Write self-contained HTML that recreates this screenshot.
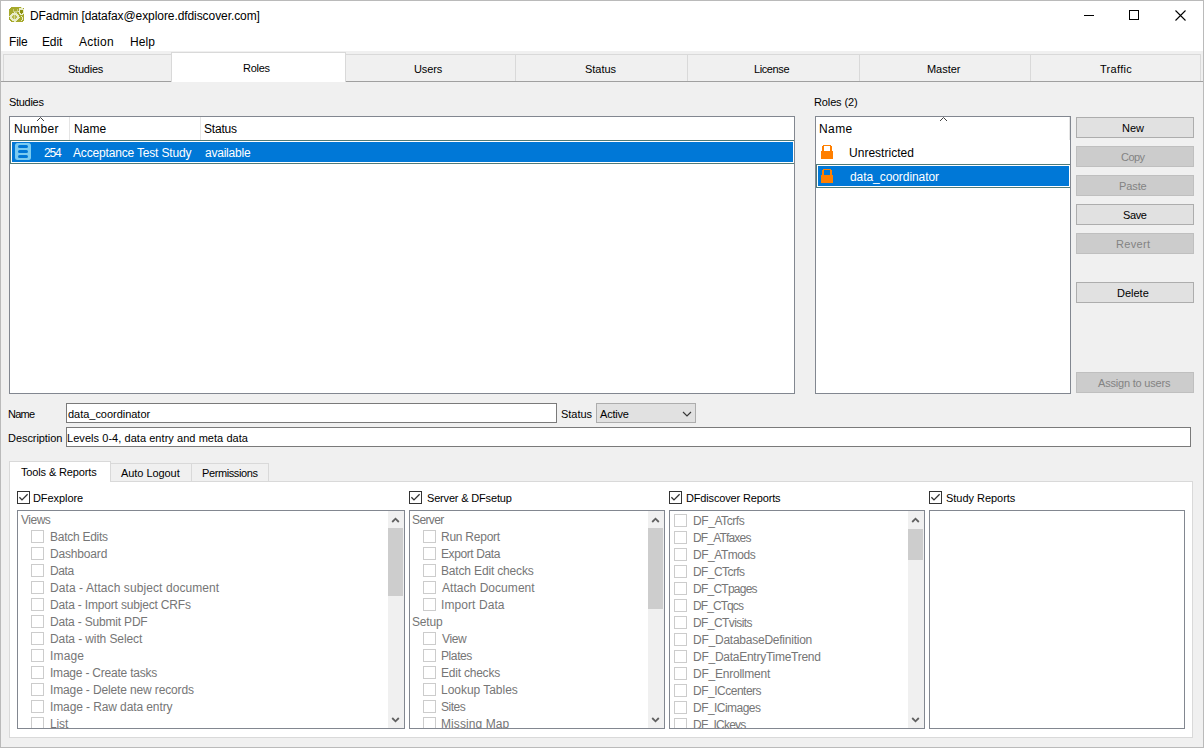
<!DOCTYPE html>
<html><head><meta charset="utf-8"><style>
html,body{margin:0;padding:0;width:1204px;height:748px;overflow:hidden;background:#f0f0f0}
.b{position:absolute;box-sizing:border-box}
.t{position:absolute;font-family:"Liberation Sans", sans-serif;font-size:12px;line-height:16px;white-space:nowrap;color:#000}
</style></head><body>
<div class="b" style="left:0px;top:0px;width:1204px;height:748px;border:1px solid #bababa;background:#f0f0f0;"></div>
<div class="b" style="left:1px;top:1px;width:1202px;height:50px;background:#ffffff;"></div>
<svg class="b" style="left:9px;top:7px" width="16" height="16" viewBox="0 0 16 16" shape-rendering="crispEdges">
<path d="M2 0H13V1H15V14H14V15H2V14H1V13H0V2H1V1H2Z" fill="#a6a92b"/>
<path d="M4 2H5V4H8V2H9V5H8V6H5V5H4Z" fill="#c7cb7e"/>
<g fill="#e9ecc9">
<path d="M3 6H8V7H9V8H10V12H9V13H8V14H3V13H2V12H1V8H2V7H3Z"/>
<path d="M5 5H6V6H5Z"/><path d="M0 9H1V10H0Z"/><path d="M5 14H7V15H5Z"/>
<path d="M11 1H14V2H15V7H14V8H11V7H10V2H11Z"/>
<path d="M10 1H11V2H10Z"/><path d="M12 0H13V1H12Z"/><path d="M9 4H10V5H9Z"/>
<path d="M12 9H13V10H14V13H13V14H12V13H13V10H12Z"/>
<path d="M10 10H11V11H10Z"/>
</g>
<path d="M4 8H7V9H8V11H7V12H4V11H3V9H4Z" fill="#b5b94b"/>
<path d="M5 8H6V12H5Z" fill="#d0d38f"/>
<path d="M11 3H14V6H13V7H12V6H11Z" fill="#8a900f"/>
</svg>
<div class="t" style="left:30px;top:8px;color:#000;font-size:12px;letter-spacing:-0.077px">DFadmin [datafax@explore.dfdiscover.com]</div>
<div class="b" style="left:1084px;top:15px;width:10px;height:1px;background:#000;"></div>
<div class="b" style="left:1129px;top:10px;width:10px;height:10px;border:1px solid #000;"></div>
<svg class="b" style="left:1175px;top:10px" width="11" height="11" viewBox="0 0 11 11"><path d="M0.5 0.5L10.5 10.5M10.5 0.5L0.5 10.5" stroke="#000" stroke-width="1.1"/></svg>
<div class="t" style="left:9px;top:34px;color:#000;font-size:12px;letter-spacing:-0.2px">File</div>
<div class="t" style="left:42px;top:34px;color:#000;font-size:12px;letter-spacing:-0.134px">Edit</div>
<div class="t" style="left:79px;top:34px;color:#000;font-size:12px;letter-spacing:0.24px">Action</div>
<div class="t" style="left:130px;top:34px;color:#000;font-size:12px;letter-spacing:0.066px">Help</div>
<div class="b" style="left:1px;top:81px;width:1202px;height:1px;background:#a0a0a0;"></div>
<div class="b" style="left:3px;top:54px;width:169px;height:27px;border:1px solid #d9d9d9;background:#f0f0f0;border-bottom:none;"></div>
<div class="t" style="left:68px;top:61px;color:#000;font-size:11px;letter-spacing:-0.233px">Studies</div>
<div class="b" style="left:345px;top:54px;width:171px;height:27px;border:1px solid #d9d9d9;background:#f0f0f0;border-bottom:none;"></div>
<div class="t" style="left:414px;top:61px;color:#000;font-size:11px;letter-spacing:-0.1px">Users</div>
<div class="b" style="left:515px;top:54px;width:173px;height:27px;border:1px solid #d9d9d9;background:#f0f0f0;border-bottom:none;"></div>
<div class="t" style="left:585px;top:61px;color:#000;font-size:11px;letter-spacing:-0.04px">Status</div>
<div class="b" style="left:687px;top:54px;width:173px;height:27px;border:1px solid #d9d9d9;background:#f0f0f0;border-bottom:none;"></div>
<div class="t" style="left:754px;top:61px;color:#000;font-size:11px;letter-spacing:-0.4px">License</div>
<div class="b" style="left:859px;top:54px;width:172px;height:27px;border:1px solid #d9d9d9;background:#f0f0f0;border-bottom:none;"></div>
<div class="t" style="left:927px;top:61px;color:#000;font-size:11px;letter-spacing:-0.04px">Master</div>
<div class="b" style="left:1030px;top:54px;width:171px;height:27px;border:1px solid #d9d9d9;background:#f0f0f0;border-bottom:none;"></div>
<div class="t" style="left:1100px;top:61px;color:#000;font-size:11px;letter-spacing:0.3px">Traffic</div>
<div class="b" style="left:171px;top:52px;width:175px;height:30px;border:1px solid #d9d9d9;background:#ffffff;border-bottom:none;"></div>
<div class="t" style="left:243px;top:60px;color:#000;font-size:11px;letter-spacing:-0.25px">Roles</div>
<div class="t" style="left:9px;top:94px;color:#000;font-size:11px;letter-spacing:-0.3px">Studies</div>
<div class="t" style="left:814px;top:94px;color:#000;font-size:11px;letter-spacing:-0.125px">Roles (2)</div>
<div class="b" style="left:9px;top:116px;width:786px;height:278px;border:1px solid #828790;background:#ffffff;"></div>
<div class="b" style="left:69px;top:117px;width:1px;height:23px;background:#e5e5e5;"></div>
<div class="b" style="left:200px;top:117px;width:1px;height:23px;background:#e5e5e5;"></div>
<svg class="b" style="left:36px;top:116px" width="10" height="7" viewBox="0 0 10 7"><path d="M1 5L4.5 1.5L8 5" fill="none" stroke="#404040" stroke-width="1"/></svg>
<div class="t" style="left:14px;top:121px;color:#000;font-size:12px;letter-spacing:0.36px">Number</div>
<div class="t" style="left:74px;top:121px;color:#000;font-size:12px;letter-spacing:0.066px">Name</div>
<div class="t" style="left:204px;top:121px;color:#000;font-size:12px;letter-spacing:-0.2px">Status</div>
<div class="b" style="left:10px;top:140px;width:784px;height:24px;border:1px solid #4f7a78;background:#ffffff;border-right:none;"></div>
<div class="b" style="left:12px;top:142px;width:781px;height:20px;background:#0078d7;"></div>
<svg class="b" style="left:15px;top:143px" width="17" height="18" viewBox="0 0 17 18">
<rect x="0" y="0" width="16" height="17" rx="2.5" fill="#7acbf0"/>
<g stroke="#0078d7" stroke-width="3" stroke-linecap="round">
<path d="M4.5 3.5H11.5M4.5 8.5H11.5M4.5 13.5H11.5"/></g></svg>
<div class="t" style="left:44px;top:145px;color:#ffffff;font-size:12px;letter-spacing:-1.2px">254</div>
<div class="t" style="left:73px;top:145px;color:#ffffff;font-size:12px;letter-spacing:-0.17px">Acceptance Test Study</div>
<div class="t" style="left:205px;top:145px;color:#ffffff;font-size:12px;letter-spacing:-0.225px">available</div>
<div class="b" style="left:815px;top:116px;width:256px;height:278px;border:1px solid #828790;background:#ffffff;"></div>
<div class="b" style="left:1069px;top:117px;width:1px;height:23px;background:#e5e5e5;"></div>
<svg class="b" style="left:939px;top:116px" width="10" height="7" viewBox="0 0 10 7"><path d="M1 5L4.5 1.5L8 5" fill="none" stroke="#404040" stroke-width="1"/></svg>
<div class="t" style="left:819px;top:121px;color:#000;font-size:12px;letter-spacing:0.4px">Name</div>
<svg class="b" style="left:821px;top:145px" width="12" height="14" viewBox="0 0 12 14" shape-rendering="crispEdges">
<path d="M0 6H12V14H0Z M2 0H10V1H11V6H9V1H3V6H1V1H2Z" fill="#ff7f00"/></svg>
<div class="t" style="left:849px;top:145px;color:#000;font-size:12px;letter-spacing:0.018px">Unrestricted</div>
<div class="b" style="left:816px;top:164px;width:254px;height:24px;border:1px solid #4f7a78;background:#ffffff;border-right:none;"></div>
<div class="b" style="left:818px;top:166px;width:251px;height:20px;background:#0078d7;"></div>
<svg class="b" style="left:821px;top:169px" width="12" height="14" viewBox="0 0 12 14" shape-rendering="crispEdges">
<path d="M0 6H12V14H0Z M2 0H10V1H11V6H9V1H3V6H1V1H2Z" fill="#ff7f00"/></svg>
<div class="t" style="left:850px;top:169px;color:#ffffff;font-size:12px;letter-spacing:-0.066px">data_coordinator</div>
<div class="b" style="left:1076px;top:117px;width:118px;height:21px;border:1px solid #adadad;background:#e1e1e1;"></div>
<div class="t" style="left:1122px;top:120px;color:#000;font-size:11px;letter-spacing:0.0px">New</div>
<div class="b" style="left:1076px;top:146px;width:118px;height:21px;border:1px solid #bfbfbf;background:#cccccc;"></div>
<div class="t" style="left:1121px;top:149px;color:#838383;font-size:11px;letter-spacing:-0.533px">Copy</div>
<div class="b" style="left:1076px;top:175px;width:118px;height:21px;border:1px solid #bfbfbf;background:#cccccc;"></div>
<div class="t" style="left:1119px;top:178px;color:#838383;font-size:11px;letter-spacing:-0.1px">Paste</div>
<div class="b" style="left:1076px;top:204px;width:118px;height:21px;border:1px solid #adadad;background:#e1e1e1;"></div>
<div class="t" style="left:1123px;top:207px;color:#000;font-size:11px;letter-spacing:-0.4px">Save</div>
<div class="b" style="left:1076px;top:233px;width:118px;height:21px;border:1px solid #bfbfbf;background:#cccccc;"></div>
<div class="t" style="left:1116px;top:236px;color:#838383;font-size:11px;letter-spacing:0.32px">Revert</div>
<div class="b" style="left:1076px;top:282px;width:118px;height:21px;border:1px solid #adadad;background:#e1e1e1;"></div>
<div class="t" style="left:1117px;top:285px;color:#000;font-size:11px;letter-spacing:0.0px">Delete</div>
<div class="b" style="left:1076px;top:372px;width:118px;height:21px;border:1px solid #bfbfbf;background:#cccccc;"></div>
<div class="t" style="left:1098px;top:375px;color:#838383;font-size:11px;letter-spacing:-0.2px">Assign to users</div>
<div class="t" style="left:8px;top:406px;color:#000;font-size:11px;letter-spacing:-0.733px">Name</div>
<div class="b" style="left:66px;top:403px;width:491px;height:20px;border:1px solid #7a7a7a;background:#ffffff;"></div>
<div class="t" style="left:68px;top:406px;color:#000;font-size:11px;letter-spacing:-0.027px">data_coordinator</div>
<div class="t" style="left:561px;top:406px;color:#000;font-size:11px;letter-spacing:-0.04px">Status</div>
<div class="b" style="left:596px;top:403px;width:100px;height:20px;border:1px solid #adadad;background:#e1e1e1;"></div>
<div class="t" style="left:600px;top:406px;color:#000;font-size:11px;letter-spacing:-0.2px">Active</div>
<svg class="b" style="left:682px;top:411px" width="10" height="7" viewBox="0 0 10 7"><path d="M1 1L5 5L9 1" fill="none" stroke="#383838" stroke-width="1.15"/></svg>
<div class="t" style="left:8px;top:430px;color:#000;font-size:11px;letter-spacing:-0.06px">Description</div>
<div class="b" style="left:66px;top:427px;width:1125px;height:20px;border:1px solid #7a7a7a;background:#ffffff;"></div>
<div class="t" style="left:67px;top:430px;color:#000;font-size:11px;letter-spacing:0.051px">Levels 0-4, data entry and meta data</div>
<div class="b" style="left:9px;top:481px;width:1184px;height:257px;border:1px solid #d9d9d9;background:#ffffff;"></div>
<div class="b" style="left:110px;top:463px;width:82px;height:18px;border:1px solid #d9d9d9;background:#f0f0f0;border-bottom:none;"></div>
<div class="b" style="left:191px;top:463px;width:78px;height:18px;border:1px solid #d9d9d9;background:#f0f0f0;border-bottom:none;"></div>
<div class="b" style="left:9px;top:461px;width:102px;height:21px;border:1px solid #d9d9d9;background:#ffffff;border-bottom:none;"></div>
<div class="t" style="left:21px;top:464px;color:#000;font-size:11px;letter-spacing:-0.143px">Tools &amp; Reports</div>
<div class="t" style="left:121px;top:465px;color:#000;font-size:11px;letter-spacing:-0.06px">Auto Logout</div>
<div class="t" style="left:202px;top:465px;color:#000;font-size:11px;letter-spacing:-0.4px">Permissions</div>
<div class="b" style="left:17px;top:491px;width:13px;height:13px;border:1px solid #333333;background:#ffffff;"></div><svg class="b" style="left:17px;top:491px" width="13" height="13" viewBox="0 0 13 13"><path d="M2.4 6.2L5 8.9L10.6 3.3" fill="none" stroke="#333" stroke-width="1.3"/></svg>
<div class="t" style="left:33px;top:490px;color:#000;font-size:11px;letter-spacing:-0.074px">DFexplore</div>
<div class="b" style="left:409px;top:491px;width:13px;height:13px;border:1px solid #333333;background:#ffffff;"></div><svg class="b" style="left:409px;top:491px" width="13" height="13" viewBox="0 0 13 13"><path d="M2.4 6.2L5 8.9L10.6 3.3" fill="none" stroke="#333" stroke-width="1.3"/></svg>
<div class="t" style="left:427px;top:490px;color:#000;font-size:11px;letter-spacing:-0.173px">Server &amp; DFsetup</div>
<div class="b" style="left:669px;top:491px;width:13px;height:13px;border:1px solid #333333;background:#ffffff;"></div><svg class="b" style="left:669px;top:491px" width="13" height="13" viewBox="0 0 13 13"><path d="M2.4 6.2L5 8.9L10.6 3.3" fill="none" stroke="#333" stroke-width="1.3"/></svg>
<div class="t" style="left:686px;top:490px;color:#000;font-size:11px;letter-spacing:-0.153px">DFdiscover Reports</div>
<div class="b" style="left:929px;top:491px;width:13px;height:13px;border:1px solid #333333;background:#ffffff;"></div><svg class="b" style="left:929px;top:491px" width="13" height="13" viewBox="0 0 13 13"><path d="M2.4 6.2L5 8.9L10.6 3.3" fill="none" stroke="#333" stroke-width="1.3"/></svg>
<div class="t" style="left:946px;top:490px;color:#000;font-size:11px;letter-spacing:-0.033px">Study Reports</div>
<div class="b" style="left:17px;top:510px;width:388px;height:219px;border:1px solid #828790;background:#ffffff;"></div>
<div class="b" style="left:18px;top:511px;width:370px;height:217px;overflow:hidden"><div class="t" style="left:3px;top:1px;color:#767676;font-size:12px;letter-spacing:-0.5px">Views</div><div class="b" style="left:13px;top:19px;width:13px;height:13px;border:1px solid #cccccc;background:#ffffff;"></div><div class="t" style="left:32px;top:18px;color:#767676;font-size:12px;letter-spacing:-0.26px">Batch Edits</div><div class="b" style="left:13px;top:36px;width:13px;height:13px;border:1px solid #cccccc;background:#ffffff;"></div><div class="t" style="left:32px;top:35px;color:#767676;font-size:12px;letter-spacing:-0.175px">Dashboard</div><div class="b" style="left:13px;top:53px;width:13px;height:13px;border:1px solid #cccccc;background:#ffffff;"></div><div class="t" style="left:32px;top:52px;color:#767676;font-size:12px;letter-spacing:-0.4px">Data</div><div class="b" style="left:13px;top:70px;width:13px;height:13px;border:1px solid #cccccc;background:#ffffff;"></div><div class="t" style="left:32px;top:69px;color:#767676;font-size:12px;letter-spacing:0.083px">Data - Attach subject document</div><div class="b" style="left:13px;top:87px;width:13px;height:13px;border:1px solid #cccccc;background:#ffffff;"></div><div class="t" style="left:32px;top:86px;color:#767676;font-size:12px;letter-spacing:-0.176px">Data - Import subject CRFs</div><div class="b" style="left:13px;top:104px;width:13px;height:13px;border:1px solid #cccccc;background:#ffffff;"></div><div class="t" style="left:32px;top:103px;color:#767676;font-size:12px;letter-spacing:-0.187px">Data - Submit PDF</div><div class="b" style="left:13px;top:121px;width:13px;height:13px;border:1px solid #cccccc;background:#ffffff;"></div><div class="t" style="left:32px;top:120px;color:#767676;font-size:12px;letter-spacing:-0.106px">Data - with Select</div><div class="b" style="left:13px;top:138px;width:13px;height:13px;border:1px solid #cccccc;background:#ffffff;"></div><div class="t" style="left:32px;top:137px;color:#767676;font-size:12px;letter-spacing:0.15px">Image</div><div class="b" style="left:13px;top:155px;width:13px;height:13px;border:1px solid #cccccc;background:#ffffff;"></div><div class="t" style="left:32px;top:154px;color:#767676;font-size:12px;letter-spacing:-0.211px">Image - Create tasks</div><div class="b" style="left:13px;top:172px;width:13px;height:13px;border:1px solid #cccccc;background:#ffffff;"></div><div class="t" style="left:32px;top:171px;color:#767676;font-size:12px;letter-spacing:-0.136px">Image - Delete new records</div><div class="b" style="left:13px;top:189px;width:13px;height:13px;border:1px solid #cccccc;background:#ffffff;"></div><div class="t" style="left:32px;top:188px;color:#767676;font-size:12px;letter-spacing:-0.105px">Image - Raw data entry</div><div class="b" style="left:13px;top:206px;width:13px;height:13px;border:1px solid #cccccc;background:#ffffff;"></div><div class="t" style="left:32px;top:205px;color:#767676;font-size:12px;letter-spacing:-0.133px">List</div></div>
<div class="b" style="left:388px;top:511px;width:16px;height:217px;background:#f0f0f0;"></div>
<div class="b" style="left:388px;top:528px;width:15px;height:68px;background:#cdcdcd;"></div>
<svg class="b" style="left:391px;top:516px" width="9" height="8" viewBox="0 0 9 8"><path d="M1.2 6L4.5 2.7L7.8 6" fill="none" stroke="#606060" stroke-width="1.8"/></svg>
<svg class="b" style="left:391px;top:716px" width="9" height="8" viewBox="0 0 9 8"><path d="M1.2 2L4.5 5.3L7.8 2" fill="none" stroke="#606060" stroke-width="1.8"/></svg>
<div class="b" style="left:409px;top:510px;width:256px;height:219px;border:1px solid #828790;background:#ffffff;"></div>
<div class="b" style="left:410px;top:511px;width:238px;height:217px;overflow:hidden"><div class="t" style="left:2px;top:1px;color:#767676;font-size:12px;letter-spacing:-0.6px">Server</div><div class="b" style="left:13px;top:19px;width:13px;height:13px;border:1px solid #cccccc;background:#ffffff;"></div><div class="t" style="left:31px;top:18px;color:#767676;font-size:12px;letter-spacing:-0.245px">Run Report</div><div class="b" style="left:13px;top:36px;width:13px;height:13px;border:1px solid #cccccc;background:#ffffff;"></div><div class="t" style="left:31px;top:35px;color:#767676;font-size:12px;letter-spacing:-0.4px">Export Data</div><div class="b" style="left:13px;top:53px;width:13px;height:13px;border:1px solid #cccccc;background:#ffffff;"></div><div class="t" style="left:31px;top:52px;color:#767676;font-size:12px;letter-spacing:-0.163px">Batch Edit checks</div><div class="b" style="left:13px;top:70px;width:13px;height:13px;border:1px solid #cccccc;background:#ffffff;"></div><div class="t" style="left:32px;top:69px;color:#767676;font-size:12px;letter-spacing:0.043px">Attach Document</div><div class="b" style="left:13px;top:87px;width:13px;height:13px;border:1px solid #cccccc;background:#ffffff;"></div><div class="t" style="left:31px;top:86px;color:#767676;font-size:12px;letter-spacing:0.08px">Import Data</div><div class="t" style="left:2px;top:103px;color:#767676;font-size:12px;letter-spacing:-0.2px">Setup</div><div class="b" style="left:13px;top:121px;width:13px;height:13px;border:1px solid #cccccc;background:#ffffff;"></div><div class="t" style="left:32px;top:120px;color:#767676;font-size:12px;letter-spacing:-0.4px">View</div><div class="b" style="left:13px;top:138px;width:13px;height:13px;border:1px solid #cccccc;background:#ffffff;"></div><div class="t" style="left:31px;top:137px;color:#767676;font-size:12px;letter-spacing:-0.4px">Plates</div><div class="b" style="left:13px;top:155px;width:13px;height:13px;border:1px solid #cccccc;background:#ffffff;"></div><div class="t" style="left:31px;top:154px;color:#767676;font-size:12px;letter-spacing:-0.22px">Edit checks</div><div class="b" style="left:13px;top:172px;width:13px;height:13px;border:1px solid #cccccc;background:#ffffff;"></div><div class="t" style="left:31px;top:171px;color:#767676;font-size:12px;letter-spacing:-0.033px">Lookup Tables</div><div class="b" style="left:13px;top:189px;width:13px;height:13px;border:1px solid #cccccc;background:#ffffff;"></div><div class="t" style="left:31px;top:188px;color:#767676;font-size:12px;letter-spacing:-0.5px">Sites</div><div class="b" style="left:13px;top:206px;width:13px;height:13px;border:1px solid #cccccc;background:#ffffff;"></div><div class="t" style="left:31px;top:205px;color:#767676;font-size:12px;letter-spacing:0.08px">Missing Map</div></div>
<div class="b" style="left:648px;top:511px;width:16px;height:217px;background:#f0f0f0;"></div>
<div class="b" style="left:648px;top:528px;width:15px;height:81px;background:#cdcdcd;"></div>
<svg class="b" style="left:651px;top:516px" width="9" height="8" viewBox="0 0 9 8"><path d="M1.2 6L4.5 2.7L7.8 6" fill="none" stroke="#606060" stroke-width="1.8"/></svg>
<svg class="b" style="left:651px;top:716px" width="9" height="8" viewBox="0 0 9 8"><path d="M1.2 2L4.5 5.3L7.8 2" fill="none" stroke="#606060" stroke-width="1.8"/></svg>
<div class="b" style="left:669px;top:510px;width:256px;height:219px;border:1px solid #828790;background:#ffffff;"></div>
<div class="b" style="left:670px;top:511px;width:238px;height:217px;overflow:hidden"><div class="b" style="left:4px;top:3px;width:13px;height:13px;border:1px solid #cccccc;background:#ffffff;"></div><div class="t" style="left:23px;top:2px;color:#767676;font-size:12px;letter-spacing:-0.426px">DF_ATcrfs</div><div class="b" style="left:4px;top:20px;width:13px;height:13px;border:1px solid #cccccc;background:#ffffff;"></div><div class="t" style="left:23px;top:19px;color:#767676;font-size:12px;letter-spacing:-0.823px">DF_ATfaxes</div><div class="b" style="left:4px;top:37px;width:13px;height:13px;border:1px solid #cccccc;background:#ffffff;"></div><div class="t" style="left:23px;top:36px;color:#767676;font-size:12px;letter-spacing:-0.474px">DF_ATmods</div><div class="b" style="left:4px;top:54px;width:13px;height:13px;border:1px solid #cccccc;background:#ffffff;"></div><div class="t" style="left:23px;top:53px;color:#767676;font-size:12px;letter-spacing:-0.575px">DF_CTcrfs</div><div class="b" style="left:4px;top:71px;width:13px;height:13px;border:1px solid #cccccc;background:#ffffff;"></div><div class="t" style="left:23px;top:70px;color:#767676;font-size:12px;letter-spacing:-0.756px">DF_CTpages</div><div class="b" style="left:4px;top:88px;width:13px;height:13px;border:1px solid #cccccc;background:#ffffff;"></div><div class="t" style="left:23px;top:87px;color:#767676;font-size:12px;letter-spacing:-0.914px">DF_CTqcs</div><div class="b" style="left:4px;top:105px;width:13px;height:13px;border:1px solid #cccccc;background:#ffffff;"></div><div class="t" style="left:23px;top:104px;color:#767676;font-size:12px;letter-spacing:-0.58px">DF_CTvisits</div><div class="b" style="left:4px;top:122px;width:13px;height:13px;border:1px solid #cccccc;background:#ffffff;"></div><div class="t" style="left:23px;top:121px;color:#767676;font-size:12px;letter-spacing:-0.24px">DF_DatabaseDefinition</div><div class="b" style="left:4px;top:139px;width:13px;height:13px;border:1px solid #cccccc;background:#ffffff;"></div><div class="t" style="left:23px;top:138px;color:#767676;font-size:12px;letter-spacing:-0.26px">DF_DataEntryTimeTrend</div><div class="b" style="left:4px;top:156px;width:13px;height:13px;border:1px solid #cccccc;background:#ffffff;"></div><div class="t" style="left:23px;top:155px;color:#767676;font-size:12px;letter-spacing:-0.234px">DF_Enrollment</div><div class="b" style="left:4px;top:173px;width:13px;height:13px;border:1px solid #cccccc;background:#ffffff;"></div><div class="t" style="left:23px;top:172px;color:#767676;font-size:12px;letter-spacing:-0.491px">DF_ICcenters</div><div class="b" style="left:4px;top:190px;width:13px;height:13px;border:1px solid #cccccc;background:#ffffff;"></div><div class="t" style="left:23px;top:189px;color:#767676;font-size:12px;letter-spacing:-0.54px">DF_ICimages</div><div class="b" style="left:4px;top:207px;width:13px;height:13px;border:1px solid #cccccc;background:#ffffff;"></div><div class="t" style="left:23px;top:206px;color:#767676;font-size:12px;letter-spacing:-0.75px">DF_ICkeys</div></div>
<div class="b" style="left:908px;top:511px;width:16px;height:217px;background:#f0f0f0;"></div>
<div class="b" style="left:908px;top:529px;width:15px;height:31px;background:#cdcdcd;"></div>
<svg class="b" style="left:911px;top:516px" width="9" height="8" viewBox="0 0 9 8"><path d="M1.2 6L4.5 2.7L7.8 6" fill="none" stroke="#606060" stroke-width="1.8"/></svg>
<svg class="b" style="left:911px;top:716px" width="9" height="8" viewBox="0 0 9 8"><path d="M1.2 2L4.5 5.3L7.8 2" fill="none" stroke="#606060" stroke-width="1.8"/></svg>
<div class="b" style="left:929px;top:510px;width:256px;height:219px;border:1px solid #828790;background:#ffffff;"></div>
</body></html>
